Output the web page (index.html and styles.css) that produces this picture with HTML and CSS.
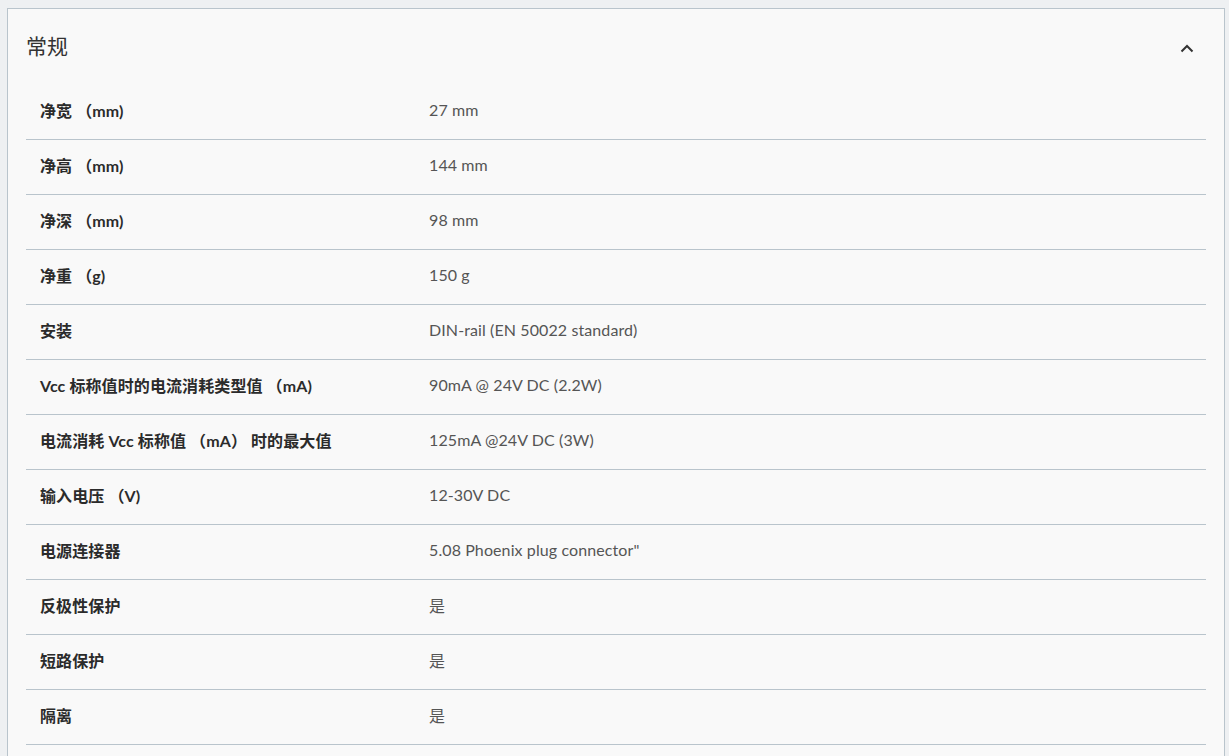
FILE: index.html
```html
<!DOCTYPE html>
<html lang="zh-CN">
<head>
<meta charset="utf-8">
<link rel="stylesheet" href="styles.css">
</head>
<body>
<div class="card">
  <div class="card-head">
    <h2 class="title">常规</h2>
    <svg class="chev" width="14" height="9" viewBox="0 0 14 9"><path d="M1.5 7.5 L7 2 L12.5 7.5" fill="none" stroke="#333" stroke-width="2"/></svg>
  </div>
  <div class="rows">
    <div class="row"><div class="label">净宽 （mm)</div><div class="value">27 mm</div></div>
    <div class="row"><div class="label">净高 （mm)</div><div class="value">144 mm</div></div>
    <div class="row"><div class="label">净深 （mm)</div><div class="value">98 mm</div></div>
    <div class="row"><div class="label">净重 （g)</div><div class="value">150 g</div></div>
    <div class="row"><div class="label">安装</div><div class="value">DIN-rail (EN 50022 standard)</div></div>
    <div class="row"><div class="label">Vcc 标称值时的电流消耗类型值 （mA)</div><div class="value">90mA @ 24V DC (2.2W)</div></div>
    <div class="row"><div class="label">电流消耗 Vcc 标称值 （mA） 时的最大值</div><div class="value">125mA @24V DC (3W)</div></div>
    <div class="row"><div class="label">输入电压 （V)</div><div class="value">12-30V DC</div></div>
    <div class="row"><div class="label">电源连接器</div><div class="value">5.08 Phoenix plug connector"</div></div>
    <div class="row"><div class="label">反极性保护</div><div class="value">是</div></div>
    <div class="row"><div class="label">短路保护</div><div class="value">是</div></div>
    <div class="row"><div class="label">隔离</div><div class="value">是</div></div>
  </div>
</div>
</body>
</html>
```
FILE: styles.css
```css
html, body {
  margin: 0;
  padding: 0;
  background: #eef0f2;
  height: 756px;
  overflow: hidden;
}
body {
  padding: 8px 4px 0 7px;
  font-family: Lato, "Noto Sans CJK SC", sans-serif;
  color: #333;
}
.card {
  background: #f9f9f9;
  border: 1px solid #b9c4cc;
  border-bottom: none;
  padding: 0 18px 20px 18px;
}
.card-head {
  height: 76px;
  display: flex;
  align-items: center;
  justify-content: space-between;
}
.title {
  margin: 0;
  font-weight: 400;
  font-size: 21px;
  color: #333;
  position: relative;
  top: -2px;
}
.chev {
  margin-right: 12px;
  position: relative;
  top: 1px;
}
.row {
  display: grid;
  grid-template-columns: 389px 1fr;
  align-items: center;
  padding: 0 14px 5px;
  box-sizing: border-box;
  height: 55px;
  border-bottom: 1px solid #b9c4cc;
  font-size: 16px;
  letter-spacing: 0.1px;
}
.label {
  font-weight: 700;
  color: #2b2b2b;
}
.value {
  color: #555;
}
```
